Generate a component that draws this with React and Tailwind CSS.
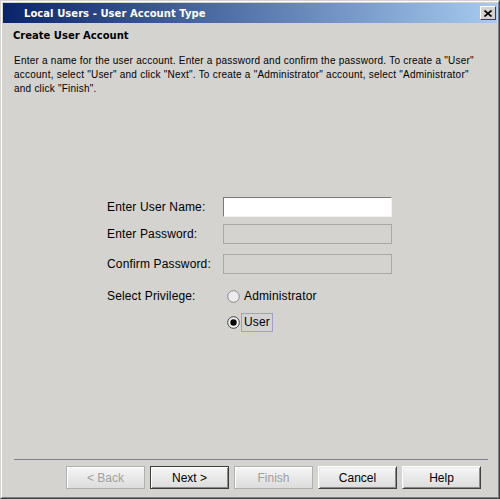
import React from "react";

function Radio({ checked }) {
  return (
    <svg width="13" height="13" viewBox="0 0 13 13" className="shrink-0">
      <circle cx="6.5" cy="6.5" r="5.8" fill={checked ? "#f4f4f4" : "#ececec"} stroke={checked ? "#404040" : "#8a8a8a"} strokeWidth="1" />
      {checked && <circle cx="6.5" cy="6.5" r="3.2" fill="#000" />}
    </svg>
  );
}

function Btn({ children, disabled, isDefault }) {
  const base =
    "w-[79px] h-[23px] flex items-center justify-center text-[12px] bg-[linear-gradient(#f6f6f6,#dcdcdc)] ";
  let cls;
  if (disabled) {
    cls = base + "border border-[#b0b0b0] text-[#a0a0a0] shadow-[inset_1px_1px_0_#fff]";
  } else if (isDefault) {
    cls = base + "border border-[#3c3c3c] text-black shadow-[inset_1px_1px_0_#fff,inset_-1px_-1px_0_#8a8a8a]";
  } else {
    cls =
      base +
      "border border-t-[#ffffff] border-l-[#ffffff] border-r-[#404040] border-b-[#404040] text-black shadow-[inset_1px_1px_0_#e8e8e8,inset_-1px_-1px_0_#8a8a8a]";
  }
  return <div className={cls}>{children}</div>;
}

export default function App() {
  return (
    <div className="w-[500px] h-[499px] bg-[#d4d3d0] border border-t-[#d4d3d0] border-l-[#d4d3d0] border-r-[#404040] border-b-[#404040] font-['Liberation_Sans',Arial,sans-serif]">
      <div className="w-full h-full flex flex-col border border-t-white border-l-white border-r-[#808080] border-b-[#808080] p-[1px]">
        {/* Title bar */}
        <div className="h-[20px] flex items-center justify-between bg-[linear-gradient(to_right,#0a246a,#a6caf0)] pl-[21px] pr-[1px]">
          <span className="text-white font-bold text-[10px] font-['DejaVu_Sans',sans-serif] tracking-[0.05px]">
            Local Users - User Account Type
          </span>
          <div className="w-[16px] h-[14px] bg-[#d4d3d0] border border-t-white border-l-white border-r-[#404040] border-b-[#404040] flex items-center justify-center">
            <svg width="8" height="7" viewBox="0 0 8 7">
              <path d="M0.5 0.5 L7.5 6.5 M7.5 0.5 L0.5 6.5" stroke="#000" strokeWidth="1.6" />
            </svg>
          </div>
        </div>

        {/* Heading */}
        <div className="mt-[6px] pl-[10px] h-[14px] leading-[14px] text-[10px] font-bold text-black font-['DejaVu_Sans',sans-serif]">
          Create User Account
        </div>

        {/* Description */}
        <div className="mt-[11px] pl-[11px] text-[10px] leading-[14px] text-black tracking-[0.23px]">
          Enter a name for the user account. Enter a password and confirm the password. To create a "User"
          <br />
          account, select "User" and click "Next". To create a "Administrator" account, select "Administrator"
          <br />
          and click "Finish".
        </div>

        {/* Form */}
        <div className="mt-[101px] pl-[104px] flex flex-col text-[12px] text-black tracking-[0.15px]">
          <div className="flex items-center h-[20px]">
            <span className="w-[116px]">Enter User Name:</span>
            <div className="w-[169px] h-[20px] bg-white border border-t-[#7a7a7a] border-l-[#7a7a7a] border-r-[#f0f0f0] border-b-[#f0f0f0]" />
          </div>
          <div className="flex items-center h-[20px] mt-[7px]">
            <span className="w-[116px]">Enter Password:</span>
            <div className="w-[169px] h-[20px] bg-[#d4d3d0] border border-[#a8a8a8]" />
          </div>
          <div className="flex items-center h-[20px] mt-[10px]">
            <span className="w-[116px]">Confirm Password:</span>
            <div className="w-[169px] h-[20px] bg-[#d4d3d0] border border-[#a8a8a8]" />
          </div>
          <div className="flex items-center h-[20px] mt-[12px]">
            <span className="w-[116px]">Select Privilege:</span>
            <div className="flex items-center pl-[4px]">
              <Radio checked={false} />
              <span className="ml-[4px]">Administrator</span>
            </div>
          </div>
          <div className="flex items-center h-[20px] mt-[6px]">
            <span className="w-[116px]"></span>
            <div className="flex items-center pl-[4px]">
              <Radio checked={true} />
              <span className="ml-[1px] px-[2px] h-[19px] leading-[17px] border border-[#a0a0c8]">User</span>
            </div>
          </div>
        </div>

        {/* Footer */}
        <div className="mt-auto pl-[11px] pr-[9px]">
          <div className="h-[1px] bg-[#7f7f92]" />
        </div>
        <div className="mt-[6px] mb-[7px] pr-[16px] flex justify-end gap-[5px]">
          <Btn disabled>&lt; Back</Btn>
          <Btn isDefault>Next &gt;</Btn>
          <Btn disabled>Finish</Btn>
          <Btn>Cancel</Btn>
          <Btn>Help</Btn>
        </div>
      </div>
    </div>
  );
}
